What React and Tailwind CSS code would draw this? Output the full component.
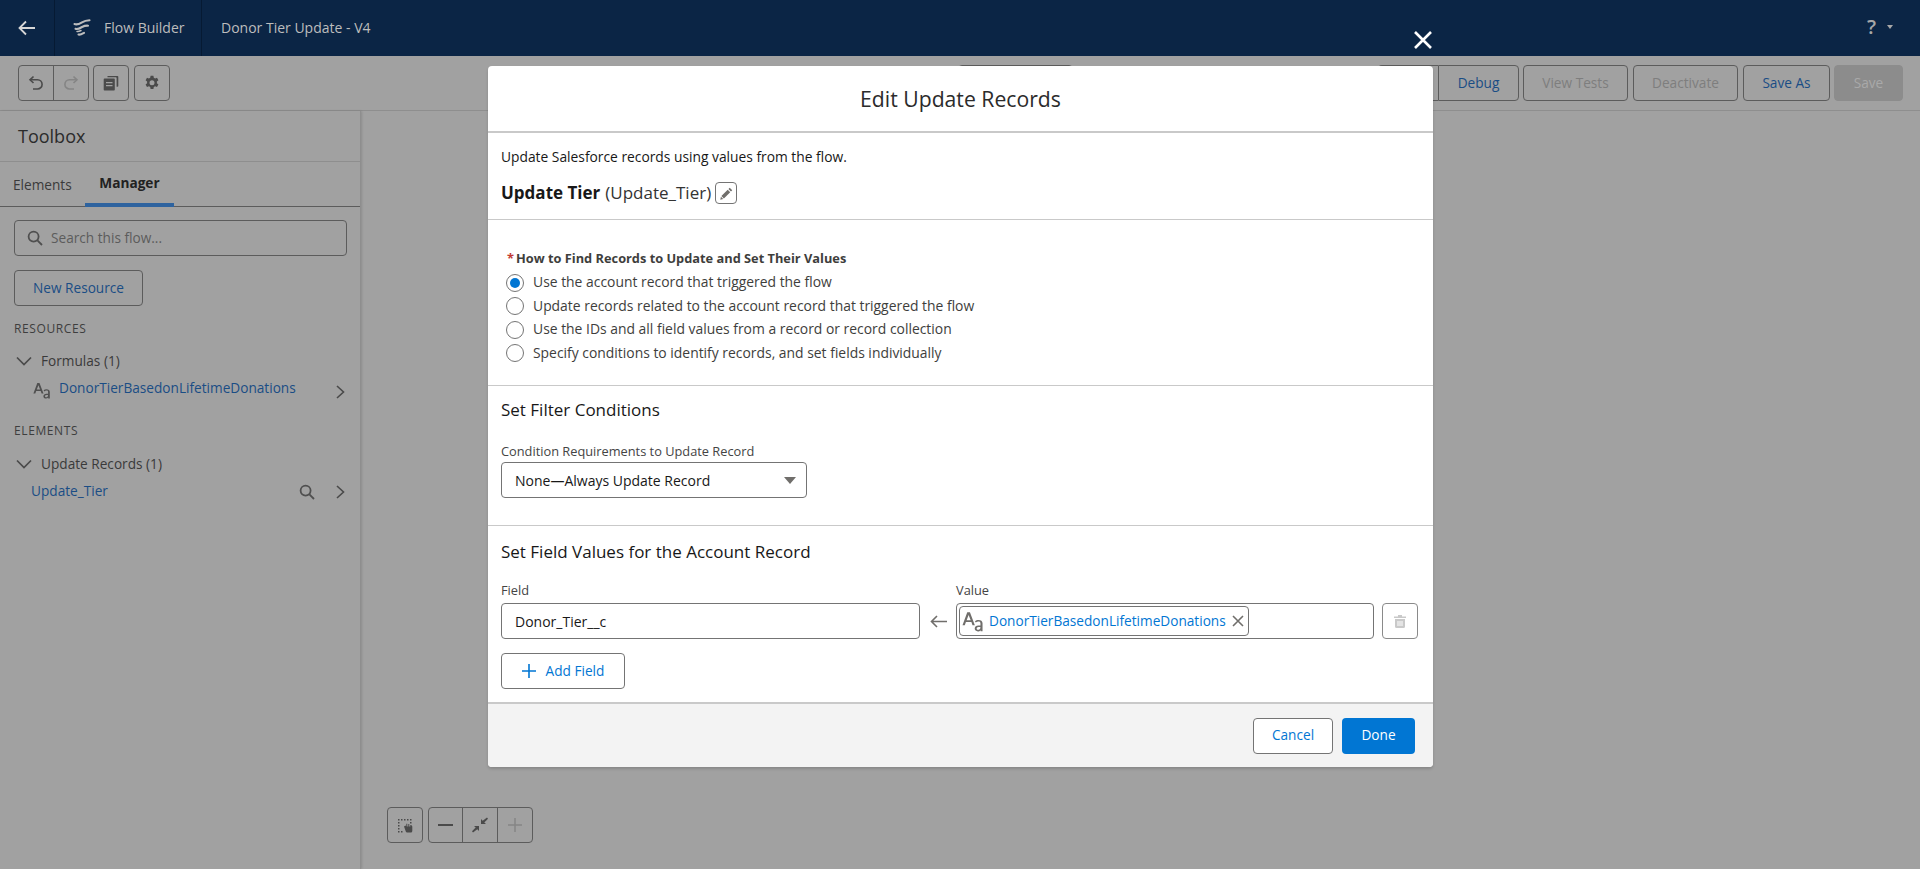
import React from "react";

const Btn = ({ children, className = "" }) => (
  <div className={"flex items-center justify-center rounded-[4px] border border-[#5c5c5c] h-9 text-[13.65px] " + className}>{children}</div>
);

const Undo = ({ c = "#4a4a4a" }) => (
  <svg width="16" height="16" viewBox="0 0 16 16" fill="none" stroke={c} strokeWidth="1.6"><path d="M5.5 1.5 2 4.8l3.5 3.2" /><path d="M2.4 4.8H9.5a4.3 4.3 0 0 1 0 9.2H5" /></svg>
);
const Redo = ({ c = "#858585" }) => (
  <svg width="16" height="16" viewBox="0 0 16 16" fill="none" stroke={c} strokeWidth="1.6"><path d="M10.5 1.5 14 4.8l-3.5 3.2" /><path d="M13.6 4.8H6.5a4.3 4.3 0 0 0 0 9.2H11" /></svg>
);
const Copy = () => (
  <svg width="16" height="16" viewBox="0 0 16 16" fill="#4a4a4a"><path d="M4.5 1H14.5a.8.8 0 0 1 .8.8V11a.8.8 0 0 1-.8.8H13.6V3a.8.8 0 0 0-.8-.8H4.5z" /><path d="M1.5 3.5H11a.8.8 0 0 1 .8.8v10.5a.8.8 0 0 1-.8.8H1.5a.8.8 0 0 1-.8-.8V4.300a.8.8 0 0 1 .8-.8zM3 7v1.200h6.500V7zM3 10v1.200h6.500V10z" fillRule="evenodd" /></svg>
);
const Gear = () => (
  <svg width="16" height="16" viewBox="0 0 16 16" fill="#4a4a4a"><path fillRule="evenodd" d="M6.600.8h2.800l.4 2 1.300.7 1.900-.7 1.400 2.400-1.500 1.400v1.600l1.500 1.400-1.400 2.400-1.900-.7-1.300.7-.4 2H6.600l-.4-2-1.300-.7-1.900.7L1.600 9.600l1.500-1.400V6.600L1.600 5.200 3 2.800l1.900.7 1.300-.7zM8 5.200a2.500 2.500 0 1 0 0 5 2.500 2.500 0 0 0 0-5z" /></svg>
);
const Search = ({ size = 16, c = "#4f4f4f" }) => (
  <svg width={size} height={size} viewBox="0 0 16 16" fill="none" stroke={c} strokeWidth="1.8"><circle cx="6.600" cy="6.600" r="5" /><path d="m10.400 10.400 4.600 4.600" /></svg>
);
const ChevDown = () => (
  <svg width="16" height="10" viewBox="0 0 16 10" fill="none" stroke="#4a4a4a" strokeWidth="1.7"><path d="m1 1.500 7 7 7-7" /></svg>
);
const ChevRight = () => (
  <svg width="9" height="14" viewBox="0 0 9 14" fill="none" stroke="#4a4a4a" strokeWidth="1.6"><path d="m1 1 6.500 6L1 13" /></svg>
);
const TextIcon = ({ c = "#565656", w = 18, h = 17 }) => (
  <svg width={w} height={h} viewBox="0 0 18 17" fill={c}>
    <path fillRule="evenodd" d="M4.300 1h2.200l4 10.500H8.600l-.9-2.600H3.200l-.9 2.600H.4zm1.100 2.200L3.800 7.400h3.300z" />
    <path fillRule="evenodd" d="M13.500 7.200c2 0 3.300.9 3.300 2.800v6.400h-1.600v-.8c-.5.6-1.200 1-2.200 1-1.500 0-2.600-.9-2.600-2.300 0-1.600 1.300-2.400 3-2.500l1.700-.1V10c0-.9-.6-1.400-1.600-1.400-.9 0-1.600.3-2.200.8l-.7-1.100c.8-.7 1.800-1.100 2.900-1.100zm1.500 5.700-1.500.1c-1 .1-1.500.5-1.500 1.200s.5 1.100 1.200 1.100c.9 0 1.800-.7 1.800-1.500z" />
  </svg>
);
const FlowLogo = () => (
  <svg width="18" height="18" viewBox="0 0 18 18" fill="none" stroke="#bdbdbd" strokeWidth="2.100" strokeLinecap="round">
    <path d="M1.500 5c2.500 1.200 5-.2 7.500-1.700 2-1.200 4-1.900 7.500-2.100" />
    <path d="M2.500 9.800c2.500.8 4.500-.6 6.500-1.800 2-1 3.500-1.500 6-1.300" />
    <path d="M5.500 15.500c2 .6 3.500-.5 5.500-1.700" />
    <path d="M4 12.500c1.500.3 2.500-.2 4-1" strokeWidth="1.500" />
  </svg>
);

const Radio = ({ checked, label }) => (
  <div className="flex items-center h-[23.5px]">
    <div className="w-[18px] h-[18px] rounded-full border border-[#747474] flex items-center justify-center bg-white">
      {checked && <div className="w-[10px] h-[10px] rounded-full bg-[#0176d3]" />}
    </div>
    <span className="ml-[9px] text-[13.9px] text-[#3e3e3c]">{label}</span>
  </div>
);

const Label = ({ children, className = "" }) => (
  <div className={"text-[12.800px] leading-[18px] text-[#444444] " + className}>{children}</div>
);

export default function App() {
  return (
    <div className="relative w-[1920px] h-[869px] overflow-hidden bg-[#a1a1a1] text-[13.65px]" style={{ fontFamily: "'Open Sans','Noto Sans',sans-serif" }}>
      {/* header */}
      <header className="h-14 bg-[#0b2545] flex items-center text-[#bdbdbd] pb-[2px]">
        <div className="w-[55px] h-14 -mb-[2px] border-r border-[#061a33] flex items-center justify-center">
          <svg width="18" height="16" viewBox="0 0 18 16" fill="none" stroke="#d6d6d6" strokeWidth="1.800"><path d="M8 1.500 1.500 8 8 14.500M2 8h15" /></svg>
        </div>
        <div className="w-[147px] h-14 -mb-[2px] border-r border-[#061a33] flex items-center pl-[18px]">
          <FlowLogo />
          <span className="ml-[13px] text-[14px] -mt-[2px]">Flow Builder</span>
        </div>
        <span className="ml-[19px] text-[14px]">Donor Tier Update - V4</span>
        <div className="ml-auto mr-[27px] flex items-center gap-[11px] text-[#a8a8a8]">
          <span className="text-[20px] font-semibold">?</span>
          <div className="w-0 h-0 border-x-[3.500px] border-x-transparent border-t-[4px] border-t-[#a8a8a8]" />
        </div>
      </header>

      {/* toolbar */}
      <div className="h-[55px] border-b border-[#8e8e8e] flex items-start pt-[9px] pl-[18px] pr-[17px]">
        <div className="flex h-9 rounded-[4px] border border-[#5c5c5c]">
          <div className="w-[35px] flex items-center justify-center border-r border-[#5c5c5c]"><Undo /></div>
          <div className="w-[34px] flex items-center justify-center"><Redo /></div>
        </div>
        <Btn className="w-9 ml-[4px]"><Copy /></Btn>
        <Btn className="w-9 ml-[5px]"><Gear /></Btn>
        <div className="ml-[788px] w-[115px] h-9 rounded-[4px] border border-[#5c5c5c]" />
        <div className="ml-auto flex items-center">
          <div className="w-[60px] h-9 rounded-l-[4px] border border-r-0 border-[#5c5c5c]" />
          <Btn className="w-[81px] text-[#1a4d85] rounded-l-none">Debug</Btn>
          <Btn className="w-[105px] ml-[4px] text-[#7e7e7e]">View Tests</Btn>
          <Btn className="w-[105px] ml-[5px] text-[#7e7e7e]">Deactivate</Btn>
          <Btn className="w-[87px] ml-[5px] text-[#1a4d85]">Save As</Btn>
          <Btn className="w-[69px] ml-[4px] bg-[#8c8c8c] border-[#8c8c8c] text-[#a9a9a9]">Save</Btn>
        </div>
      </div>

      <div className="flex h-[758px]">
        {/* sidebar */}
        <aside className="w-[361px] border-r border-[#8e8e8e] shadow-[1px_0_2px_rgba(0,0,0,0.12)] flex flex-col">
          <div className="h-[51px] border-b border-[#8e8e8e] pl-[18px] flex items-center text-[18px] text-[#2b2b2b]">Toolbox</div>
          <div className="h-[45px] border-b border-[#5c5c5c] flex items-end">
            <div className="w-[85px] h-full flex items-center pl-[13px] pt-[3px] text-[#3a3a3a]">Elements</div>
            <div className="w-[89px] h-[45px] -mb-[1px] flex items-center justify-center pt-[2px] font-bold text-[#222] border-b-[4px] border-[#2e639f]">Manager</div>
          </div>
          <div className="mt-[13px] ml-[14px] mr-[13px] h-9 rounded-[4px] border border-[#5c5c5c] flex items-center pl-[12px] text-[#5c5c5c]">
            <Search />
            <span className="ml-[8px]">Search this flow...</span>
          </div>
          <Btn className="mt-[14px] ml-[14px] w-[129px] text-[#1a4d85]">New Resource</Btn>
          <div className="mt-[14px] ml-[14px] text-[12px] tracking-[0.6px] text-[#3e3e3e] leading-[18px]">RESOURCES</div>
          <div className="mt-[13px] ml-[16px] flex items-center text-[#3a3a3a] h-[20px]"><ChevDown /><span className="ml-[9px]">Formulas (1)</span></div>
          <div className="mt-[9px] ml-[33px] mr-[15px] flex items-center h-[20px]">
            <TextIcon c="#505050" />
            <span className="ml-[8px] text-[#1a4d85] -mt-[3px]">DonorTierBasedonLifetimeDonations</span>
            <span className="ml-auto mt-[3px]"><ChevRight /></span>
          </div>
          <div className="mt-[22px] ml-[14px] text-[12px] tracking-[0.6px] text-[#3e3e3e] leading-[18px]">ELEMENTS</div>
          <div className="mt-[14px] ml-[16px] flex items-center text-[#3a3a3a] h-[20px]"><ChevDown /><span className="ml-[9px]">Update Records (1)</span></div>
          <div className="mt-[7px] ml-[31px] mr-[15px] flex items-center h-[20px]">
            <span className="text-[#1a4d85]">Update_Tier</span>
            <span className="ml-auto mr-[21px] mt-[2px]"><Search size={16} /></span>
            <span className="mt-[2px]"><ChevRight /></span>
          </div>
        </aside>

        {/* canvas */}
        <main className="flex-1 relative">
          <div className="absolute left-[26px] top-[696px] flex gap-[5px]">
            <Btn className="w-9">
              <svg width="17" height="15" viewBox="0 0 17 15" fill="#4a4a4a">
                <path d="M1 1h1.500v1.500H1zM4 1h1.500v1.500H4zM7 1h1.500v1.500H7zM10 1h1.500v1.500H10zM13 1h1.500v1.500H13zM1 4h1.500v1.500H1zM1 7h1.500v1.500H1zM1 10h1.500v1.500H1zM1 13h1.500v1.500H1zM4 13h1.500v1.500H4zM13 4h1.500v1.500H13z" />
                <path d="M7 8.500l1.500-1 .8 1V5.700l1 0v2.800l1 0V6h1v2.500l1 0V7h1l1 1.500V13a1.500 1.500 0 0 1-1.500 1.500H10A1.500 1.500 0 0 1 9 14z" />
              </svg>
            </Btn>
            <div className="flex h-9 rounded-[4px] border border-[#5c5c5c]">
              <div className="w-[34px] flex items-center justify-center border-r border-[#5c5c5c]">
                <div className="w-[15px] h-[2px] bg-[#4a4a4a]" />
              </div>
              <div className="w-[35px] flex items-center justify-center border-r border-[#5c5c5c]">
                <svg width="16" height="16" viewBox="0 0 16 16" fill="#4a4a4a"><path d="M15 .5 16 1.800 12.300 5.400 14 7H9V2l1.700 1.700zM1 15.500 0 14.200l3.700-3.600L2 9h5v5l-1.700-1.700z" /></svg>
              </div>
              <div className="w-[34px] flex items-center justify-center">
                <svg width="14" height="14" viewBox="0 0 14 14" fill="none" stroke="#858585" strokeWidth="1.500"><path d="M7 0v14M0 7h14" /></svg>
              </div>
            </div>
          </div>
        </main>
      </div>

      {/* close X */}
      <svg className="absolute left-[1413px] top-[30px]" width="20" height="20" viewBox="0 0 20 20" fill="none" stroke="#ffffff" strokeWidth="2.600"><path d="m2 2 16 16M18 2 2 18" /></svg>

      {/* modal */}
      <div className="absolute left-[488px] top-[66px] w-[945px] h-[701px] bg-white rounded-[4px] shadow-[0_2px_3px_rgba(0,0,0,0.16)] flex flex-col text-[#181818]">
        <div className="h-[67px] pt-[1px] flex items-center justify-center text-[21.200px] text-[#2b2b2b] border-b-2 border-[#c9c9c9] shrink-0">Edit Update Records</div>

        <div className="h-[87px] border-b border-[#c9c9c9] px-[13px] shrink-0">
          <div className="pt-[14px] text-[13.800px] leading-[20px]">Update Salesforce records using values from the flow.</div>
          <div className="mt-[15px] flex items-center h-[22px]">
            <span className="text-[17px] font-bold">Update Tier</span>
            <span className="ml-[5px] text-[17px] text-[#333]">(Update_Tier)</span>
            <div className="ml-[4px] w-[22px] h-[22px] border border-[#747474] rounded-[4px] flex items-center justify-center">
              <svg width="13" height="13" viewBox="0 0 14 14" fill="#706e6b"><path d="M10.500.8 13.200 3.500 11.800 4.900 9.100 2.200zM8.300 3 11 5.700 4.200 12.500 1.500 9.800zM1 10.500 3.500 13 .3 13.700z" /></svg>
            </div>
          </div>
        </div>

        <div className="h-[166px] border-b border-[#c9c9c9] shrink-0 pt-[30px] pl-[18px]">
          <div className="flex items-center h-[18px] text-[12.800px] font-bold text-[#3e3e3c]"><span className="text-[#c23934] ml-[1px] mr-[2px]">*</span>How to Find Records to Update and Set Their Values</div>
          <div className="mt-[3px]">
            <Radio checked label="Use the account record that triggered the flow" />
            <Radio label="Update records related to the account record that triggered the flow" />
            <Radio label="Use the IDs and all field values from a record or record collection" />
            <Radio label="Specify conditions to identify records, and set fields individually" />
          </div>
        </div>

        <div className="h-[140px] border-b border-[#c9c9c9] shrink-0 px-[13px]">
          <div className="pt-[12px] text-[17px] leading-[24px]">Set Filter Conditions</div>
          <Label className="mt-[20px]">Condition Requirements to Update Record</Label>
          <div className="mt-[2px] w-[306px] h-9 border border-[#747474] rounded-[4px] flex items-center pl-[13px] pr-[10px] text-[14px] text-[#181818]">
            None—Always Update Record
            <div className="ml-auto w-0 h-0 border-x-[6px] border-x-transparent border-t-[7px] border-t-[#706e6b]" />
          </div>
        </div>

        <div className="flex-1 px-[13px]">
          <div className="pt-[14px] text-[17px] leading-[24px]">Set Field Values for the Account Record</div>
          <div className="mt-[17px] flex items-end">
            <div className="w-[419px]">
              <Label>Field</Label>
              <div className="mt-[4px] h-9 border border-[#747474] rounded-[4px] flex items-center pl-[13px] text-[14px]">Donor_Tier__c</div>
            </div>
            <div className="w-[36px] h-9 flex items-center justify-center text-[#706e6b]">
              <svg width="17" height="13" viewBox="0 0 17 13" fill="none" stroke="#706e6b" strokeWidth="1.600"><path d="M7 1 1.500 6.500 7 12M2 6.500h15" /></svg>
            </div>
            <div className="w-[418px]">
              <Label>Value</Label>
              <div className="mt-[4px] h-9 border border-[#747474] rounded-[4px] flex items-center pl-[2px]">
                <div className="h-[30px] w-[290px] border border-[#747474] rounded-[4px] flex items-center pl-[2px]">
                  <TextIcon c="#706e6b" w={22} h={21} />
                  <span className="ml-[5px] text-[13.650px] text-[#0176d3]">DonorTierBasedonLifetimeDonations</span>
                  <svg className="ml-auto mr-[4px]" width="12" height="12" viewBox="0 0 12 12" fill="none" stroke="#706e6b" strokeWidth="1.600"><path d="m1 1 10 10M11 1 1 11" /></svg>
                </div>
              </div>
            </div>
            <div className="ml-[8px] w-9 h-9 border border-[#8a8a8a] rounded-[4px] flex items-center justify-center">
              <svg width="12" height="13" viewBox="0 0 12 13" fill="#c9c9c9"><path d="M4 0h4v1.500h4V3H0V1.500h4zM1 4h10v7.500A1.500 1.500 0 0 1 9.500 13h-7A1.500 1.500 0 0 1 1 11.500zM3.500 6v5h1V6zM5.500 6v5h1V6zM7.500 6v5h1V6z" fillRule="evenodd" /></svg>
            </div>
          </div>
          <div className="mt-[14px] w-[124px] h-9 border border-[#747474] rounded-[4px] flex items-center justify-center text-[#0176d3]">
            <svg width="14" height="14" viewBox="0 0 14 14" fill="none" stroke="#0176d3" strokeWidth="1.600"><path d="M7 0v14M0 7h14" /></svg>
            <span className="ml-[10px]">Add Field</span>
          </div>
        </div>

        <div className="h-[65px] border-t-2 border-[#c9c9c9] bg-[#f3f3f3] rounded-b-[4px] flex items-center justify-end pr-[18px] shrink-0">
          <div className="w-[80px] h-9 bg-white border border-[#747474] rounded-[4px] flex items-center justify-center text-[#0176d3]">Cancel</div>
          <div className="ml-[9px] w-[73px] h-9 bg-[#0176d3] rounded-[4px] flex items-center justify-center text-white">Done</div>
        </div>
      </div>
    </div>
  );
}
